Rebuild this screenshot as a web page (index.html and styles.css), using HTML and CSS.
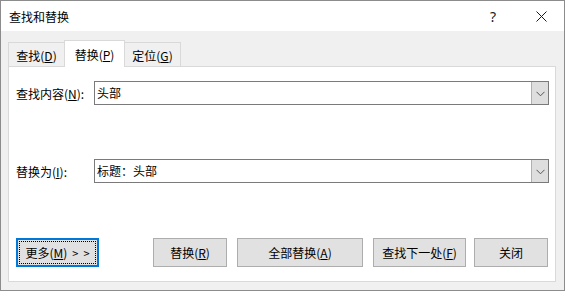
FILE: index.html
```html
<!DOCTYPE html>
<html lang="zh-CN">
<head>
<meta charset="utf-8">
<title>查找和替换</title>
<link rel="stylesheet" href="styles.css">
</head>
<body>
<div class="window">
  <div class="titlebar">
    <span class="title">查找和替换</span>
    <span class="help">?</span>
    <span class="close"><svg width="11" height="11" viewBox="0 0 11 11"><path d="M0.5 0.5 L10.5 10.5 M10.5 0.5 L0.5 10.5" stroke="#1a1a1a" stroke-width="1" fill="none"/></svg></span>
  </div>
  <div class="body">
    <div class="tabs">
      <div class="tab">查找(<u>D</u>)</div>
      <div class="tab active">替换(<u>P</u>)</div>
      <div class="tab">定位(<u>G</u>)</div>
    </div>
    <div class="panel">
      <div class="row">
        <div class="label">查找内容(<u>N</u>):</div>
        <div class="combo"><span class="val">头部</span><span class="drop"><svg width="9" height="6" viewBox="0 0 9 6"><path d="M0.5 0.8 L4.5 4.8 L8.5 0.8" stroke="#555" stroke-width="1" fill="none"/></svg></span></div>
      </div>
      <div class="row row2">
        <div class="label">替换为(<u>I</u>):</div>
        <div class="combo"><span class="val">标题：头部</span><span class="drop"><svg width="9" height="6" viewBox="0 0 9 6"><path d="M0.5 0.8 L4.5 4.8 L8.5 0.8" stroke="#555" stroke-width="1" fill="none"/></svg></span></div>
      </div>
      <div class="buttons">
        <div class="btn default"><span class="focus">更多(<u>M</u>)<span class="arrows">&gt;</span><span class="arrows">&gt;</span></span></div>
        <div class="btn w74 first">替换(<u>R</u>)</div>
        <div class="btn w126">全部替换(<u>A</u>)</div>
        <div class="btn w93">查找下一处(<u>F</u>)</div>
        <div class="btn w74 last">关闭</div>
      </div>
    </div>
  </div>
</div>
</body>
</html>
```
FILE: styles.css
```css
html, body {
  margin: 0;
  padding: 0;
  background: #f0f0f0;
}
body {
  font-family: "Noto Sans CJK SC", "Noto Sans", sans-serif;
  font-size: 12px;
  color: #000;
}
u { text-decoration: underline; text-underline-offset: 1px; }
.window {
  width: 565px;
  height: 291px;
  box-sizing: border-box;
  border: 1px solid #8c8c8c;
  background: #f0f0f0;
  display: flex;
  flex-direction: column;
}
.titlebar {
  height: 30px;
  background: #fff;
  display: flex;
  align-items: center;
  flex: none;
}
.title {
  margin-left: 8px;
  font-size: 12px;
  flex: 1;
}
.help {
  width: 14px;
  text-align: center;
  margin-right: 36px;
  font-size: 14px;
  font-family: "Noto Sans", sans-serif;
  color: #1a1a1a;
}
.close {
  width: 11px;
  height: 11px;
  margin-right: 17px;
  display: flex;
}
.body {
  padding: 9px 0 0 7px;
}
.tabs {
  display: flex;
  align-items: flex-end;
  height: 26px;
}
.tab {
  box-sizing: border-box;
  height: 24px;
  width: 57px;
  border: 1px solid #d9d9d9;
  border-bottom: none;
  background: #f0f0f0;
  display: flex;
  align-items: center;
  justify-content: center;
  padding-top: 1px;
}
.tab + .tab { margin-left: -1px; }
.tab.active {
  height: 27px;
  width: 61px;
  background: #fff;
  margin-bottom: -1px;
  position: relative;
  z-index: 1;
  padding-top: 0;
}
.panel {
  box-sizing: border-box;
  width: 548px;
  height: 216px;
  background: #fff;
  border: 1px solid #d9d9d9;
  padding: 14px 6px 0 7px;
}
.row {
  display: flex;
  align-items: center;
  height: 24px;
}
.row2 { margin-top: 54px; }
.label {
  width: 78px;
  flex: none;
}
.combo {
  flex: 1;
  height: 24px;
  box-sizing: border-box;
  border: 1px solid #7a7a7a;
  display: flex;
  align-items: center;
}
.val {
  flex: 1;
  padding-left: 2px;
  padding-bottom: 1px;
}
.drop {
  width: 17px;
  height: 22px;
  box-sizing: border-box;
  background: #dedede;
  border-left: 1px solid #b0b0b0;
  display: flex;
  align-items: center;
  justify-content: center;
  padding-top: 1px;
}
.buttons {
  display: flex;
  margin-top: 55px;
}
.btn {
  box-sizing: border-box;
  height: 29px;
  border: 1px solid #adadad;
  background: #e1e1e1;
  display: flex;
  align-items: center;
  justify-content: center;
  padding-bottom: 1px;
}
.btn.default {
  width: 83px;
  border: 2px solid #0078d7;
  padding: 1px;
}
.focus {
  flex: 1;
  align-self: stretch;
  border: 1px dotted #000;
  display: flex;
  align-items: center;
  justify-content: center;
}
.arrows {
  margin-left: 5px;
  font-size: 11px;
}
.w74 { width: 74px; }
.w126 { width: 126px; }
.w93 { width: 93px; }
.btn + .btn { margin-left: 10px; }
.btn.first { margin-left: 54px; }
.btn.last { margin-left: 8px; }
```
